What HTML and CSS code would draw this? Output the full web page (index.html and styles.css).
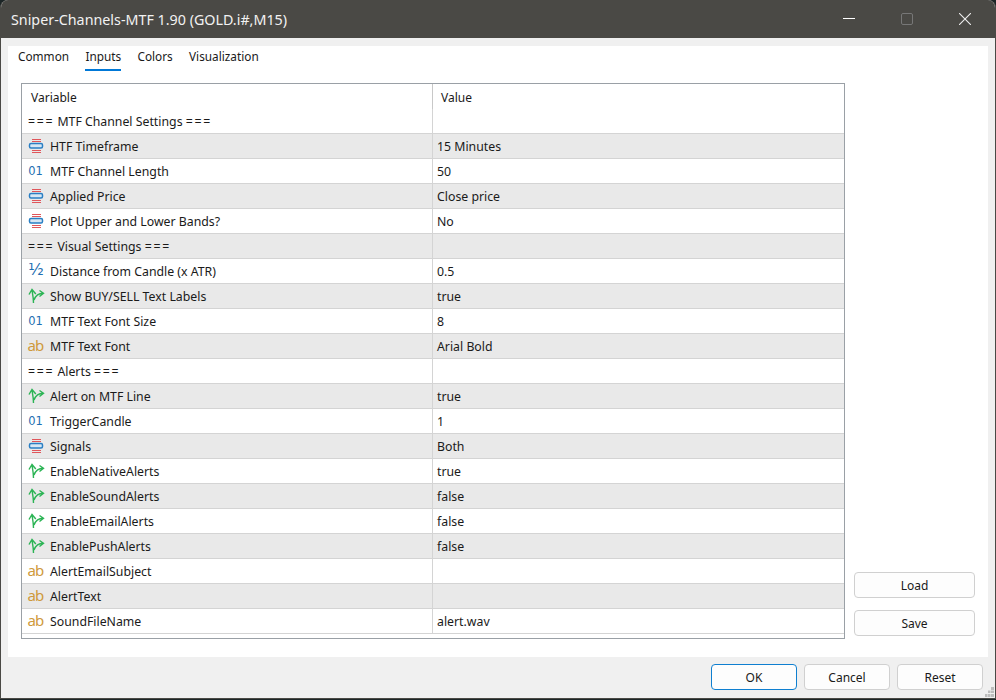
FILE: index.html
```html
<!DOCTYPE html>
<html lang="en">
  <head>
    <meta charset="UTF-8" />
    <title>Sniper-Channels-MTF 1.90</title>
    <link rel="stylesheet" href="styles.css">
  </head>
  <body>
    <svg class="defs" width="0" height="0">
      <symbol id="enum" viewBox="0 0 18 18">
        <path d="M5 4.500h9M5 6.500h9M5 15.500h9M5 17.500h9" stroke="#e0565b" stroke-width="1.2" fill="none" />
        <rect x="2.500" y="8.500" width="13" height="4.500" rx="1.500" fill="#d6e7f5" stroke="#2a7fc4" stroke-width="1.500" />
      </symbol>
      <symbol id="bool" viewBox="0 0 18 18">
        <path d="M2 9.500L5 4.500L8.800 9M5 5C5.500 8 6.500 13 6.500 18M7 15C8.500 11 12 8.300 16.200 8.300M12.500 5.500L16.500 8.300L12.500 11.500" stroke="#2cb455" stroke-width="1.400" fill="none" />
      </symbol>
    </svg>
    <div class="window">
      <div class="titlebar">
        <span class="title">Sniper-Channels-MTF 1.90 (GOLD.i#,M15)</span>
        <div class="controls">
          <svg width="12" height="12" viewBox="0 0 12 12"><path d="M0 5.500h12" stroke="#fff" /></svg>
          <svg width="12" height="12" viewBox="0 0 12 12"><rect x=".5" y=".5" width="11" height="11" rx="1.500" fill="none" stroke="#777" /></svg>
          <svg width="12" height="12" viewBox="0 0 12 12"><path d="M0 0l12 12M12 0L0 12" stroke="#eee" stroke-width="1.100" /></svg>
        </div>
      </div>
      <div class="content">
        <div class="panel">
          <div class="tabs">
            <span class="tab">Common</span>
            <span class="tab active">Inputs</span>
            <span class="tab">Colors</span>
            <span class="tab">Visualization</span>
          </div>
          <div class="panel-body">
            <div class="grid-box">
              <div class="head">
                <div class="head-var">Variable</div>
                <div class="head-val">Value</div>
              </div>
              <div class="row"><div class="var plain"><span class="eq">===</span> MTF Channel Settings <span class="eq">===</span></div><div class="val"></div></div>
              <div class="row odd"><div class="var"><svg class="ico"><use href="#enum" /></svg>HTF Timeframe</div><div class="val">15 Minutes</div></div>
              <div class="row"><div class="var"><span class="ico num">01</span>MTF Channel Length</div><div class="val">50</div></div>
              <div class="row odd"><div class="var"><svg class="ico"><use href="#enum" /></svg>Applied Price</div><div class="val">Close price</div></div>
              <div class="row"><div class="var"><svg class="ico"><use href="#enum" /></svg>Plot Upper and Lower Bands?</div><div class="val">No</div></div>
              <div class="row odd"><div class="var plain"><span class="eq">===</span> Visual Settings <span class="eq">===</span></div><div class="val"></div></div>
              <div class="row"><div class="var"><span class="ico half">½</span>Distance from Candle (x ATR)</div><div class="val">0.5</div></div>
              <div class="row odd"><div class="var"><svg class="ico"><use href="#bool" /></svg>Show BUY/SELL Text Labels</div><div class="val">true</div></div>
              <div class="row"><div class="var"><span class="ico num">01</span>MTF Text Font Size</div><div class="val">8</div></div>
              <div class="row odd"><div class="var"><span class="ico str">ab</span>MTF Text Font</div><div class="val">Arial Bold</div></div>
              <div class="row"><div class="var plain"><span class="eq">===</span> Alerts <span class="eq">===</span></div><div class="val"></div></div>
              <div class="row odd"><div class="var"><svg class="ico"><use href="#bool" /></svg>Alert on MTF Line</div><div class="val">true</div></div>
              <div class="row"><div class="var"><span class="ico num">01</span>TriggerCandle</div><div class="val">1</div></div>
              <div class="row odd"><div class="var"><svg class="ico"><use href="#enum" /></svg>Signals</div><div class="val">Both</div></div>
              <div class="row"><div class="var"><svg class="ico"><use href="#bool" /></svg>EnableNativeAlerts</div><div class="val">true</div></div>
              <div class="row odd"><div class="var"><svg class="ico"><use href="#bool" /></svg>EnableSoundAlerts</div><div class="val">false</div></div>
              <div class="row"><div class="var"><svg class="ico"><use href="#bool" /></svg>EnableEmailAlerts</div><div class="val">false</div></div>
              <div class="row odd"><div class="var"><svg class="ico"><use href="#bool" /></svg>EnablePushAlerts</div><div class="val">false</div></div>
              <div class="row"><div class="var"><span class="ico str">ab</span>AlertEmailSubject</div><div class="val"></div></div>
              <div class="row odd"><div class="var"><span class="ico str">ab</span>AlertText</div><div class="val"></div></div>
              <div class="row"><div class="var"><span class="ico str">ab</span>SoundFileName</div><div class="val">alert.wav</div></div>
            </div>
            <div class="side">
              <button class="btn wide">Load</button>
              <button class="btn wide">Save</button>
            </div>
          </div>
        </div>
        <div class="footer">
          <button class="btn primary">OK</button>
          <button class="btn">Cancel</button>
          <button class="btn">Reset</button>
        </div>
      </div>
      <svg class="grip" width="10" height="10" viewBox="0 0 10 10">
        <path d="M7 0h3v3H7zM4 3.500h2.500v2.500H4zM7 3.500h3v2.500H7zM1 7h2.500v3H1zM4 7h2.500v3H4zM7 7h3v3H7z" fill="#bdbdbd" />
      </svg>
    </div>
  </body>
</html>
```

FILE: styles.css
```css
* {
  box-sizing: border-box;
}

body {
  margin: 0;
  width: 996px;
  height: 700px;
  overflow: hidden;
  background-color: #1c2526;
  font-family: "Noto Sans", Arial, sans-serif;
  font-size: 12px;
  color: #1a1a1a;
}

.defs {
  position: absolute;
}

.window {
  position: relative;
  height: 699px;
  display: flex;
  flex-direction: column;
  border-radius: 8px 8px 0 0;
  overflow: hidden;
  background-color: #f0f0f0;
  border: 1px solid #4a4945;
  border-top: none;
}

.grip {
  position: absolute;
  right: 1px;
  bottom: 1px;
}

.titlebar {
  height: 38px;
  flex: none;
  display: flex;
  justify-content: space-between;
  align-items: center;
  padding-left: 10px;
  background-color: #4a4945;
  color: #f2f2f2;
}

.title {
  font-size: 14.3px;
}

.controls {
  display: flex;
  align-items: center;
  gap: 46px;
  padding-right: 24px;
}

.content {
  flex: 1;
  display: flex;
  flex-direction: column;
  padding: 8px 7px 0;
}

.panel {
  height: 611px;
  background-color: white;
  padding: 0 0 0 13px;
}

.tabs {
  display: flex;
  height: 37px;
  gap: 16.3px;
  margin-left: -3px;
  font-size: 11.8px;
}

.tab {
  height: 25px;
  padding-top: 1px;
  line-height: 18px;
}

.tab.active {
  border-bottom: 2px solid #0078d7;
}

.panel-body {
  display: flex;
  gap: 9px;
}

.grid-box {
  width: 824px;
  height: 556px;
  border: 1px solid #9aa0a6;
  background-color: white;
}

.head {
  display: flex;
  height: 25px;
  line-height: 27px;
}

.head-var {
  width: 411px;
  padding-left: 9px;
  border-right: 1px solid #c8c8c8;
}

.head-val {
  padding-left: 8px;
}

.row {
  display: flex;
  height: 25px;
  line-height: 26px;
  font-size: 12.3px;
  border-bottom: 1px solid #d4d4d4;
}

.row.odd {
  background-color: #e9e9e9;
}

.var {
  width: 411px;
  display: flex;
  align-items: center;
  white-space: pre;
  border-right: 1px solid #d4d4d4;
  padding-left: 5px;
  padding-top: 2px;
}

.var.plain {
  display: block;
  padding-left: 6px;
  padding-top: 0;
}

.eq {
  letter-spacing: 1.7px;
}

.val {
  padding-left: 4px;
}

.ico {
  width: 18px;
  height: 18px;
  flex: none;
  margin-right: 5px;
  margin-top: -6px;
  text-align: center;
  line-height: 18px;
}

.num {
  color: #1f6fb2;
  font-family: "DejaVu Sans", sans-serif;
  font-size: 11.5px;
  line-height: 22px;
  text-indent: -1px;
}

.str {
  color: #cf9a3c;
  font-size: 15px;
  letter-spacing: -0.8px;
  line-height: 21px;
  text-indent: -1px;
}

.half {
  color: #1f6fb2;
  font-family: "DejaVu Sans", sans-serif;
  font-size: 16px;
  line-height: 20px;
}

.side {
  width: 121px;
  margin-top: 489px;
  display: flex;
  flex-direction: column;
  gap: 12px;
}

.btn {
  width: 86px;
  height: 26px;
  padding: 0;
  background-color: #fdfdfd;
  border: 1px solid #d0d0d0;
  border-radius: 4px;
  font: inherit;
  color: #1a1a1a;
}

.btn.wide {
  width: 121px;
}

.btn.primary {
  border-color: #0f7fd0;
}

.footer {
  flex: 1;
  display: flex;
  justify-content: flex-end;
  gap: 7px;
  padding-top: 7px;
  padding-right: 5px;
}
```
